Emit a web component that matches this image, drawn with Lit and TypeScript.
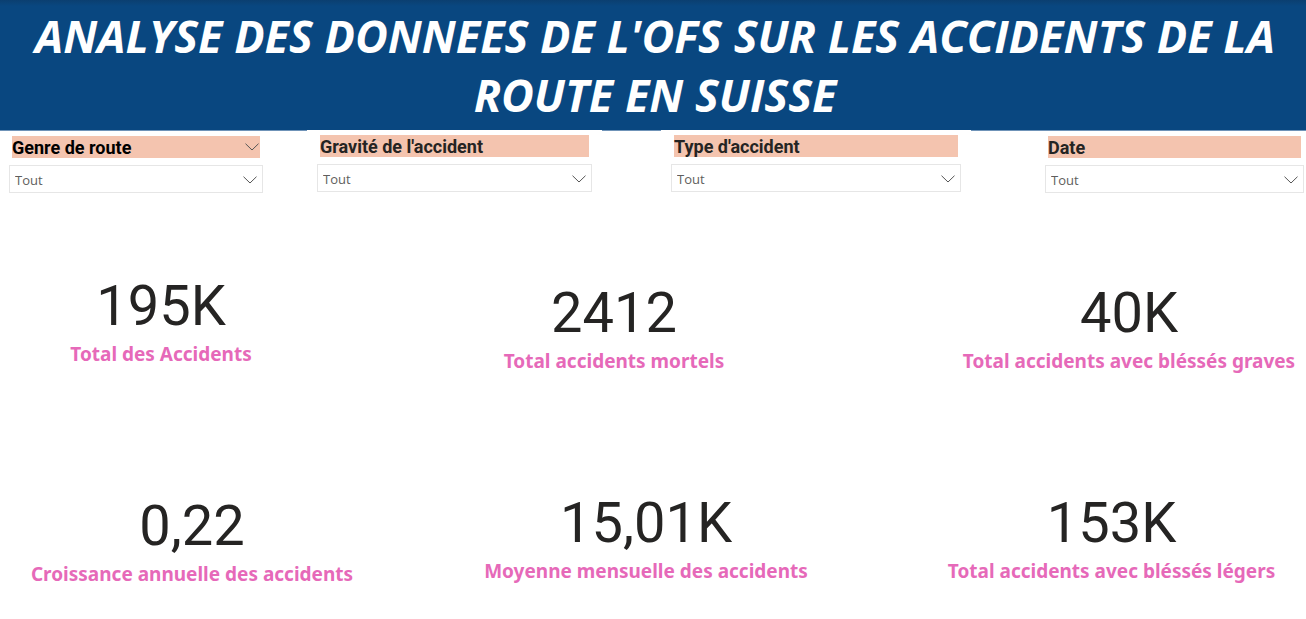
import { LitElement, html, css, nothing } from "lit";
import { customElement, property } from "lit/decorators.js";

const chevron = html`<svg class="chevron" viewBox="0 0 14 8" aria-hidden="true">
  <path d="M0.5 0.7 L7 7 L13.5 0.7" fill="none" stroke="currentColor" stroke-width="1" />
</svg>`;

@customElement("report-filter")
class ReportFilter extends LitElement {
  @property() label = "";
  @property({ type: Boolean }) active = false;

  static styles = css`
    :host {
      display: block;
    }
    .bar {
      display: flex;
      align-items: center;
      justify-content: space-between;
      height: 22px;
      margin: 0 3px 7px;
      background: #f4c4af;
      color: #252423;
    }
    .bar.active {
      color: #000;
    }
    .name {
      font: 700 18px/22px Roboto, sans-serif;
      padding-top: 2px;
      white-space: nowrap;
    }
    .toggle {
      display: flex;
      padding: 0 1px;
      border: 0;
      background: none;
      color: #555;
    }
    .chevron {
      display: block;
      width: 14px;
      height: 8px;
    }
    .box {
      display: grid;
      align-items: center;
      color: #555;
    }
    .box > * {
      grid-area: 1 / 1;
    }
    .box .chevron {
      justify-self: end;
      margin: 2px 6px 0 0;
      pointer-events: none;
    }
    .choice {
      appearance: none;
      width: 100%;
      height: 28px;
      margin: 0;
      padding: 2px 24px 0 5px;
      border: 1px solid #e6e6e6;
      border-radius: 0;
      background: #fff;
      color: #605e5c;
      font: 400 13px/20px "Open Sans", sans-serif;
    }
  `;

  render() {
    return html`
      <div class="bar ${this.active ? "active" : ""}">
        <label class="name" for="choice">${this.label}</label>
        ${this.active
          ? html`<button class="toggle" aria-label="Options">${chevron}</button>`
          : nothing}
      </div>
      <div class="box">
        <select class="choice" id="choice">
          <option>Tout</option>
        </select>
        ${chevron}
      </div>
    `;
  }
}

@customElement("kpi-card")
class KpiCard extends LitElement {
  @property() value = "";
  @property() label = "";

  static styles = css`
    :host {
      display: block;
      text-align: center;
      white-space: nowrap;
    }
    .value {
      margin: 0;
      color: #252423;
      font: 400 56px/64px Roboto, sans-serif;
    }
    .label {
      margin: 0;
      color: #e669b9;
      font: 700 19px/32px "Noto Sans", sans-serif;
    }
  `;

  render() {
    return html`
      <p class="value">${this.value}</p>
      <p class="label">${this.label}</p>
    `;
  }
}

@customElement("app-root")
class AppRoot extends LitElement {
  static styles = css`
    :host {
      display: block;
      min-height: 100vh;
      background: #fff;
    }
    .banner {
      padding: 6px 12px 6px 16px;
      border-bottom: 1px solid #6f93b8;
      background: linear-gradient(#0b3f70, #094780 6px);
      color: #fff;
    }
    .title {
      margin: 0;
      text-align: center;
      font: italic 700 45px/59px "Open Sans", sans-serif;
    }
    .filters {
      display: grid;
      grid-template-columns: 273fr 34fr 295fr 59fr 310fr 64fr 271fr;
      align-items: start;
    }
    .filter {
      padding: 5px 10px 0;
    }
    .filter.first {
      grid-column: 1;
      padding-left: 9px;
    }
    .filter.second {
      grid-column: 3;
    }
    .filter.third {
      grid-column: 5;
    }
    .filter.last {
      grid-column: 7;
      padding-right: 2px;
    }
    .filter.over {
      margin-top: -1px;
      background: #fff;
    }
    .row {
      display: grid;
      align-items: start;
    }
    .totals {
      grid-template-columns: 322fr 584fr 46fr 354fr;
      margin-top: 81px;
    }
    .trends {
      grid-template-columns: 384fr 524fr 9fr 389fr;
      margin-top: 114px;
    }
    .end {
      grid-column: 4;
    }
    .totals .lower {
      padding-top: 7px;
    }
    .trends .lower {
      padding-top: 3px;
    }
  `;

  render() {
    return html`
      <header class="banner">
        <h1 class="title">ANALYSE DES DONNEES DE L'OFS SUR LES ACCIDENTS DE LA ROUTE EN SUISSE</h1>
      </header>
      <main>
        <section class="filters" aria-label="Filtres">
          <report-filter class="filter first" label="Genre de route" active></report-filter>
          <report-filter class="filter second over" label="Gravité de l'accident"></report-filter>
          <report-filter class="filter third over" label="Type d'accident"></report-filter>
          <report-filter class="filter last" label="Date"></report-filter>
        </section>
        <section class="row totals">
          <kpi-card value="195K" label="Total des Accidents"></kpi-card>
          <kpi-card class="lower" value="2412" label="Total accidents mortels"></kpi-card>
          <kpi-card class="end lower" value="40K" label="Total accidents avec bléssés graves"></kpi-card>
        </section>
        <section class="row trends">
          <kpi-card class="lower" value="0,22" label="Croissance annuelle des accidents"></kpi-card>
          <kpi-card value="15,01K" label="Moyenne mensuelle des accidents"></kpi-card>
          <kpi-card class="end" value="153K" label="Total accidents avec bléssés légers"></kpi-card>
        </section>
      </main>
    `;
  }
}
